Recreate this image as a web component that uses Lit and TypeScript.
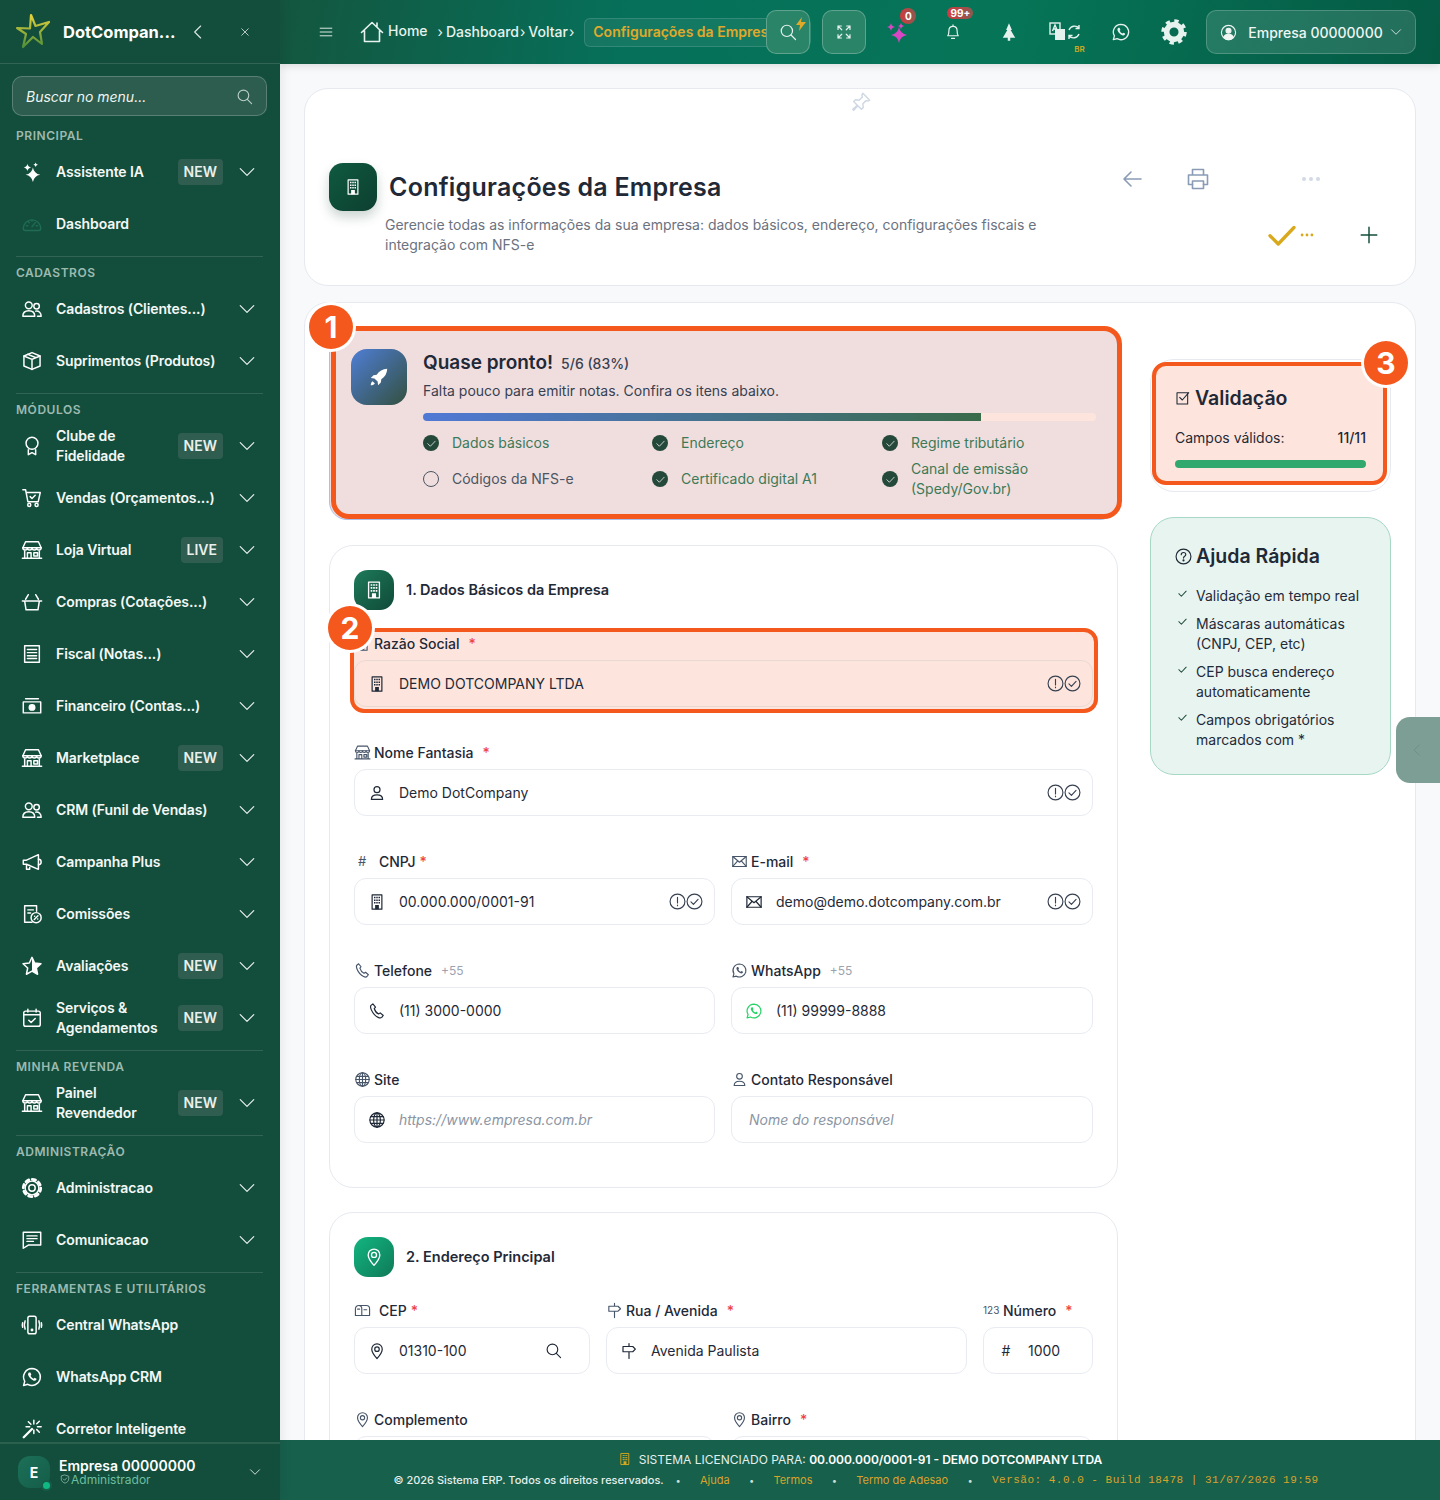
import { LitElement, css, html, svg, nothing } from 'lit';
import { customElement } from 'lit/decorators.js';

const star4 = (x: number, y: number, r: number) =>
	`M${x} ${y - r}Q${x + r * .15} ${y - r * .15} ${x + r} ${y}Q${x + r * .15} ${y + r * .15} ${x} ${y + r}Q${x - r * .15} ${y + r * .15} ${x - r} ${y}Q${x - r * .15} ${y - r * .15} ${x} ${y - r}z`;

const WA_BUBBLE = 'M12 2.8a9.2 9.2 0 0 0-7.9 13.9L2.8 21.2l4.6-1.2A9.2 9.2 0 1 0 12 2.8z';
const WA_PHONE = 'M8.6 7.2c-.7.6-1.2 1.7-.7 3 .8 2.3 3.2 4.8 5.6 5.7 1.4.5 2.4.1 3-.7.4-.5.5-1.1.4-1.3l-2.1-1.1-1 1.1c-1.4-.6-2.8-2-3.4-3.4l.9-1-.9-2.2c-.3-.3-1.2-.4-1.8-.1z';

const ICONS: Record<string, unknown> = {
	sparkles: svg`<path fill="currentColor" stroke="none" d="${star4(13, 15, 8)}"/><path fill="currentColor" stroke="none" d="${star4(7, 7, 4)}"/><path fill="currentColor" stroke="none" d="${star4(16, 4, 2.5)}"/>`,
	gauge: svg`<path d="M2.5 17a9.5 9.5 0 1 1 19 0c0 1.3-.8 2-2 2h-15c-1.2 0-2-.7-2-2z"/><path d="M12 15l3.5-4.5M6 14h1.5M16.5 14H18M8 9.5l1 1M12 7.5V9"/>`,
	people: svg`<circle cx="8.5" cy="8" r="3.7"/><path d="M2 20c0-4 2.6-6 6.500-6s6.500 2 6.500 6z"/><circle cx="17" cy="9" r="3"/><path d="M16 14.300c3.600-.4 6 1.700 6 5.700h-4"/>`,
	box: svg`<path d="M12 2.800l8.800 3.700v11L12 21.200l-8.800-3.700v-11z"/><path d="M3.200 6.500l8.800 3.700 8.800-3.700M12 10.200v11M7.500 4.700l9 3.700"/>`,
	award: svg`<circle cx="12" cy="9" r="6.500"/><path d="M8 16v5.500l4-2.200 4 2.200V16"/>`,
	cart: svg`<path d="M2 3h3l2.500 13h11.300L21 6H5.600"/><path d="M10 10.500l2 2 3.500-3.500"/><circle cx="9" cy="19.500" r="1.700"/><circle cx="17" cy="19.500" r="1.700"/>`,
	shop: svg`<path d="M5 3h14l3 6.500a2.500 2.500 0 0 1-5 0 2.500 2.500 0 0 1-5 0 2.500 2.500 0 0 1-5 0 2.500 2.500 0 0 1-5 0z"/><path d="M4 13v8h16v-8M7 21v-6h4v6M14 15h4v3.500h-4zM1.500 21h21M2 9.500h20"/>`,
	basket: svg`<path d="M1.500 11h21M8 4l-3 5M16 4l3 5M4 11l1.500 9.500h13L20 11"/>`,
	receipt: svg`<path d="M4 3h16v18H4z"/><path d="M7 7h10M7 10.500h10M7 14h10M7 17h10"/>`,
	cash: svg`<path d="M2.500 7.500h19v12h-19zM5 4h14"/><circle cx="12" cy="13.500" r="3" fill="currentColor"/>`,
	megaphone: svg`<path d="M2.500 10v4.500H6L19 20V4L6 10zM6 14.500V20h3.500v-4.200"/><path d="M19 9c1.800 0 3 1.300 3 3s-1.200 3-3 3"/>`,
	commission: svg`<path d="M12 21H4V3h13v6M7.500 7.500h6M7.500 11h3"/><circle cx="16.500" cy="16" r="5.500"/><path d="M14.500 18l4-4M14.800 14.500h.1M18.200 17.500h.1"/>`,
	star: svg`<path d="M12 2.500l2.900 6.300 6.900.8-5.100 4.600 1.400 6.800L12 17.600 5.900 21l1.400-6.800L2.200 9.600l6.900-.8z"/><path fill="currentColor" stroke="none" d="M12 2.500l2.900 6.300 6.900.8-5.100 4.600 1.400 6.800L12 17.600z"/>`,
	calendar: svg`<rect x="3" y="4.500" width="18" height="16.500" rx="2"/><path d="M3 8.500h18M7.500 2.500v3M16.500 2.500v3M8.500 14.500l2.500 2.500 4.500-4.500"/>`,
	gear: svg`<circle cx="12" cy="12" r="3.500"/><circle cx="12" cy="12" r="7.500"/><circle cx="12" cy="12" r="9.500" stroke-width="3" stroke-dasharray="3.700 3.760"/>`,
	gearSolid: svg`<circle cx="12" cy="12" r="6.800" stroke-width="5.200"/><circle cx="12" cy="12" r="10" stroke-width="3.500" stroke-linecap="butt" stroke-dasharray="3.900 3.950"/>`,
	chat: svg`<path d="M2.500 3.500h19v14H8l-5.500 3.500z"/><path d="M6.500 7.500h11M6.500 10.500h11M6.500 13.500h7"/>`,
	vibrate: svg`<rect x="7.500" y="2.500" width="9" height="19" rx="2"/><path d="M4.500 7.500c-1 2.500-1 6.500 0 9M19.500 7.500c1 2.500 1 6.500 0 9M1.800 9.500c-.5 1.500-.5 3.500 0 5M22.200 9.500c.5 1.500.5 3.500 0 5"/><circle cx="12" cy="17.500" r=".8" fill="currentColor"/>`,
	whatsapp: svg`<path d="${WA_BUBBLE}"/><path fill="currentColor" stroke="none" d="${WA_PHONE}"/>`,
	magic: svg`<path d="M3 21l9-9" stroke-width="2.600"/><path d="M14 2.500v4M14 13v4M5.500 9.500h4M18 9.500h4M8 4l2.800 2.800M20 3.500l-2.800 2.800M20 15.500l-2.800-2.800"/>`,
	search: svg`<circle cx="10.500" cy="10.500" r="7.500"/><path d="M16 16l6 6"/>`,
	menu: svg`<path d="M2 5.500h20M2 12h20M2 18.500h20"/>`,
	home: svg`<path d="M1.500 12.500L12 2.500l10.500 10M4.500 10.500V21.500h15V10.500M17 3v3.500"/>`,
	expand: svg`<path d="M4 4l5 5M4 8.500V4h4.500M20 4l-5 5M15.500 4H20v4.500M4 20l5-5M4 15.500V20h4.500M20 20l-5-5M20 15.500V20h-4.500"/>`,
	bell: svg`<path d="M5 17c1.500-2 1.500-4 1.500-6.500 0-3.500 2.300-6 5.500-6s5.500 2.500 5.500 6c0 2.500 0 4.500 1.500 6.500z"/><path d="M10 20.500h4M12 2.500v2" />`,
	tree: svg`<path fill="currentColor" stroke="none" d="M12 1.500l3.500 8H14l4 7 1.500 2.500h-6v3.500h-3V19h-6L6 16.500l4-7H8.500z"/>`,
	userCircle: svg`<circle cx="12" cy="12" r="10"/><circle cx="12" cy="9.500" r="3.500" fill="currentColor"/><path fill="currentColor" d="M5.500 18.500c1-3 3.500-4 6.500-4s5.500 1 6.500 4c-1.500 2-4 3.500-6.500 3.500s-5-1.500-6.500-3.500z"/>`,
	chevDown: svg`<path d="M3 7.500l9 9 9-9"/>`,
	chevLeft: svg`<path d="M16 3l-9 9 9 9"/>`,
	close: svg`<path d="M5.500 5.500l13 13M18.500 5.500l-13 13"/>`,
	pin: svg`<path d="M14 2.500l7.500 7.500-2 1-2-.5-3.500 3.500.5 4-2 2-4-4-4.500 5-1-1 5-4.500-4-4 2-2 4 .5L13.500 6.500l-.5-2z"/>`,
	arrowLeft: svg`<path d="M21 12H4M11 5l-7 7 7 7"/>`,
	printer: svg`<path d="M6.500 8V2.500h11V8M6.500 17.500h-4V8h19v9.500h-4"/><path d="M6.500 14h11v7.500h-11z"/>`,
	plus: svg`<path d="M12 3.500v17M3.500 12h17"/>`,
	building: svg`<path d="M5.500 2.500h13v19h-13z"/><path fill="currentColor" stroke="none" d="M8 5h2v2H8zM11 5h2v2h-2zM14 5h2v2h-2zM8 8.500h2v2H8zM11 8.500h2v2h-2zM14 8.500h2v2h-2zM8 12h2v2H8zM11 12h2v2h-2zM14 12h2v2h-2zM9.500 16h5v5.500h-5z"/>`,
	person: svg`<circle cx="12" cy="7.500" r="4"/><path d="M4.500 20.500c0-4.500 3-6 7.500-6s7.500 1.500 7.500 6z"/>`,
	envelope: svg`<path d="M2.500 5h19v14h-19z"/><path d="M2.500 5l9.500 8 9.500-8M2.500 19l7-8M21.500 19l-7-8"/>`,
	phone: svg`<path d="M6.500 2.500L4 4.500c-1 1-.8 3 .5 6 1.800 4.200 5 8 9 10 2 1 3.700 1 4.800 0l2-2.500-4-3.500-2.200 1.500c-2-.9-4.900-4.300-5.800-7.300l1.700-2z"/>`,
	globe: svg`<circle cx="12" cy="12" r="9.500"/><ellipse cx="12" cy="12" rx="4.500" ry="9.500"/><path d="M2.500 12h19M12 2.500v19M3.800 7.500h16.400M3.800 16.500h16.400"/>`,
	pinGeo: svg`<path d="M12 22c-4-4.500-7-8.500-7-12.500a7 7 0 0 1 14 0C19 13.500 16 17.500 12 22z"/><circle cx="12" cy="9.500" r="3"/>`,
	signpost: svg`<path d="M12 2v4M12 13v9M4 6h13l3.500 3.500L17 13H4z"/>`,
	mailbox: svg`<path d="M6.500 5h11a4.500 4.500 0 0 1 4.500 4.500V19H2V9.500A4.500 4.500 0 0 1 6.500 5zM11 19V9.500A4.500 4.500 0 0 0 6.500 5"/><path d="M14 11h4M5 10h3"/>`,
	checkSquare: svg`<path d="M3 4h16v17H3z"/><path d="M7 11l4 4 9.500-11"/>`,
	help: svg`<circle cx="12" cy="12" r="10.500"/><path d="M8.800 9.500c0-2 1.400-3.200 3.200-3.200s3.200 1.100 3.200 2.900c0 2.500-3.200 2.500-3.200 5"/><circle cx="12" cy="17.500" r=".7" fill="currentColor"/>`,
	check: svg`<path d="M4 12.500l5.500 5.500L20 7"/>`,
	alertCircle: svg`<circle cx="12" cy="12" r="10.500"/><path d="M12 6v8M12 17v1"/>`,
	checkCircle: svg`<circle cx="12" cy="12" r="10.500"/><path d="M7 12.500l3.500 3.500L17 9"/>`,
	shield: svg`<path d="M12 2.500l9 3v6c0 5-4 9-9 10.500-5-1.500-9-5.500-9-10.500v-6z"/><path d="M8 12l3 3 5-5.500"/>`,
	rocket: svg`<path fill="currentColor" stroke="none" d="M21 3c-5 .3-9 2.500-11.500 6.500L6 10l-3 3 4 .5L10.500 17l.5 4 3-3 .5-3.500C18.500 12 20.700 8 21 3zM5 16.500c-1.500 1-2 3-2 4.500 1.500 0 3.500-.5 4.500-2z"/>`,
};

const icon = (name: string, size = 24, cls = '') =>
	html`<svg class="ic ${cls}" width=${size} height=${size} viewBox="0 0 24 24" fill="none" stroke="currentColor" stroke-width="1.6" stroke-linecap="round" stroke-linejoin="round">${ICONS[name]}</svg>`;

const dots = html`<svg class="ic" width="20" height="6" viewBox="0 0 20 6" fill="currentColor"><circle cx="3" cy="3" r="2"/><circle cx="10" cy="3" r="2"/><circle cx="17" cy="3" r="2"/></svg>`;

type NavItem = { icon: string; text: string; badge?: string; chev?: boolean; dim?: boolean };

const NAV: { label: string; items: NavItem[] }[] = [
	{ label: 'PRINCIPAL', items: [
		{ icon: 'sparkles', text: 'Assistente IA', badge: 'NEW', chev: true },
		{ icon: 'gauge', text: 'Dashboard', dim: true },
	] },
	{ label: 'CADASTROS', items: [
		{ icon: 'people', text: 'Cadastros (Clientes...)', chev: true },
		{ icon: 'box', text: 'Suprimentos (Produtos)', chev: true },
	] },
	{ label: 'MÓDULOS', items: [
		{ icon: 'award', text: 'Clube de Fidelidade', badge: 'NEW', chev: true },
		{ icon: 'cart', text: 'Vendas (Orçamentos...)', chev: true },
		{ icon: 'shop', text: 'Loja Virtual', badge: 'LIVE', chev: true },
		{ icon: 'basket', text: 'Compras (Cotações...)', chev: true },
		{ icon: 'receipt', text: 'Fiscal (Notas...)', chev: true },
		{ icon: 'cash', text: 'Financeiro (Contas...)', chev: true },
		{ icon: 'shop', text: 'Marketplace', badge: 'NEW', chev: true },
		{ icon: 'people', text: 'CRM (Funil de Vendas)', chev: true },
		{ icon: 'megaphone', text: 'Campanha Plus', chev: true },
		{ icon: 'commission', text: 'Comissões', chev: true },
		{ icon: 'star', text: 'Avaliações', badge: 'NEW', chev: true },
		{ icon: 'calendar', text: 'Serviços & Agendamentos', badge: 'NEW', chev: true },
	] },
	{ label: 'MINHA REVENDA', items: [
		{ icon: 'shop', text: 'Painel Revendedor', badge: 'NEW', chev: true },
	] },
	{ label: 'ADMINISTRAÇÃO', items: [
		{ icon: 'gear', text: 'Administracao', chev: true },
		{ icon: 'chat', text: 'Comunicacao', chev: true },
	] },
	{ label: 'FERRAMENTAS E UTILITÁRIOS', items: [
		{ icon: 'vibrate', text: 'Central WhatsApp' },
		{ icon: 'whatsapp', text: 'WhatsApp CRM' },
		{ icon: 'magic', text: 'Corretor Inteligente' },
	] },
];

const CHECKLIST = [
	{ text: 'Dados básicos', done: true },
	{ text: 'Endereço', done: true },
	{ text: 'Regime tributário', done: true },
	{ text: 'Códigos da NFS-e', done: false },
	{ text: 'Certificado digital A1', done: true },
	{ text: 'Canal de emissão (Spedy/Gov.br)', done: true },
];

const HELP = [
	'Validação em tempo real',
	'Máscaras automáticas (CNPJ, CEP, etc)',
	'CEP busca endereço automaticamente',
	'Campos obrigatórios marcados com *',
];

type Field = {
	label: string;
	labelIcon?: string;
	labelText?: string;
	req?: boolean;
	tight?: boolean;
	hint?: string;
	inputIcon?: string;
	inputText?: string;
	value?: string;
	placeholder?: string;
	status?: boolean;
	lookup?: boolean;
	wa?: boolean;
	mark?: boolean;
	cls?: string;
};

@customElement('app-root')
export class AppRoot extends LitElement {
	static styles = css`
		:host {
			display: block;
			width: 1440px;
			height: 1500px;
			overflow: hidden;
			font-family: Inter, "Liberation Sans", sans-serif;
			font-size: 14px;
			color: #1f2937;
		}
		* { box-sizing: border-box; }
		.ic { display: block; flex-shrink: 0; }

		.app {
			display: grid;
			grid-template-columns: 280px 1fr;
			height: 1500px;
		}

		/* sidebar */
		.side {
			display: flex;
			flex-direction: column;
			height: 1500px;
			min-height: 0;
			background: #134e3c;
			color: #fff;
			box-shadow: 2px 0 10px rgba(0, 0, 0, .08);
			position: relative;
			z-index: 2;
		}
		.brand {
			display: flex;
			align-items: center;
			height: 64px;
			flex-shrink: 0;
			padding-left: 14px;
			border-bottom: 1px solid rgba(255, 255, 255, .13);
		}
		.brand .name {
			width: 111px;
			margin-left: 11px;
			font-size: 16.5px;
			font-weight: 700;
			white-space: nowrap;
		}
		.brand .back { margin-left: 16px; color: #dfe9e5; }
		.brand .x { margin-left: 33px; color: #dfe9e5; }
		.search-wrap { padding: 12px 13px 4px 12px; flex-shrink: 0; }
		.search {
			display: flex;
			align-items: center;
			justify-content: space-between;
			height: 40px;
			padding: 0 13px;
			border: 1px solid rgba(255, 255, 255, .22);
			border-radius: 10px;
			background: #2c5d4e;
			font-style: italic;
			color: #eef5f2;
		}
		.search .ic { color: #b8cdc6; }
		.nav { flex: 1; min-height: 0; overflow: hidden; }
		.sep { height: 1px; margin: 6px 17px 0 16px; background: rgba(255, 255, 255, .13); }
		.sec-label {
			margin-top: 5px;
			padding-left: 16px;
			height: 21px;
			line-height: 21px;
			font-size: 12px;
			font-weight: 600;
			letter-spacing: .55px;
			color: #9dbab0;
		}
		.item {
			display: flex;
			align-items: center;
			height: 52px;
			padding: 0 24px 0 21px;
		}
		.item .label {
			flex: 1;
			margin-left: 13px;
			font-weight: 600;
			font-size: 14px;
			letter-spacing: -.1px;
			line-height: 20px;
			color: #f4f8f6;
		}
		.item .dim { color: #1f6b55; }
		.badge {
			margin-left: 6px;
			padding: 0 6px;
			height: 26px;
			line-height: 26px;
			border-radius: 4px;
			background: #2f5d50;
			font-weight: 600;
			color: #e8f0ed;
		}
		.item .chev { margin-left: 15px; color: #e8f0ed; }
		.side-foot {
			display: flex;
			align-items: center;
			flex-shrink: 0;
			height: 58px;
			padding: 0 19px 0 18px;
			border-top: 2px solid rgba(255, 255, 255, .1);
		}
		.avatar {
			position: relative;
			display: grid;
			place-items: center;
			width: 32px;
			height: 32px;
			border-radius: 12px;
			background: linear-gradient(135deg, #1c7058, #155d49);
			font-weight: 700;
		}
		.avatar::after {
			content: '';
			position: absolute;
			right: -2px;
			bottom: -3px;
			width: 7px;
			height: 7px;
			border-radius: 50%;
			background: #10b981;
			border: 2px solid #155d49;
			box-sizing: content-box;
		}
		.who { flex: 1; margin-left: 9px; }
		.who .n { font-size: 14px; font-weight: 600; line-height: 13px; }
		.who .r {
			display: flex;
			align-items: center;
			margin-top: 1px;
			font-size: 12px;
			line-height: 13px;
			color: #6dbf9f;
		}
		.who .r .ic { margin: 0 1px; color: #a9cfc0; }

		/* main column */
		.main {
			display: flex;
			flex-direction: column;
			min-width: 0;
			height: 1500px;
			background: #f8f9fb;
		}
		.top {
			display: flex;
			align-items: center;
			flex-shrink: 0;
			height: 64px;
			padding-left: 39px;
			background: linear-gradient(100deg, #14563f 0%, #06705a 30%, #067557 62%, #055a44 100%);
			box-shadow: 0 2px 8px rgba(0, 0, 0, .12);
			color: #e6f2ee;
			position: relative;
			z-index: 1;
		}
		.crumb { font-weight: 500; white-space: nowrap; transform: translateY(-1px); }
		.crumb.up { transform: translateY(-2px); margin: 0 9px 0 4px; }
		.spacer { width: 27px; }
		.gt { margin: 0 3px 0 1px; color: #e6f2ee; transform: translateY(-1px); }
		.pill {
			width: 227px;
			height: 29px;
			line-height: 25px;
			margin-left: 7px;
			padding-left: 8px;
			border: 1px solid rgba(255, 255, 255, .13);
			border-radius: 6px;
			background: rgba(255, 255, 255, .06);
			color: #e0a92a;
			font-weight: 600;
			white-space: nowrap;
		}
		.tbtn {
			display: grid;
			place-items: center;
			width: 44px;
			height: 44px;
			border: 1px solid rgba(255, 255, 255, .25);
			border-radius: 10px;
			background: #2a8468;
			position: relative;
		}
		.tbtn.search-btn { margin-left: -45px; }
		.tbtn.full { margin-left: 12px; }
		.bolt { position: absolute; top: 6px; right: 3px; color: #e0a92a; }
		.spark { color: #d946c4; }
		.cell {
			display: grid;
			place-items: center;
			width: 56px;
			height: 44px;
			position: relative;
		}
		.cell.first { margin-left: 3px; }
		.cell.gear { width: 50px; }
		.count {
			position: absolute;
			display: grid;
			place-items: center;
			color: #fff;
			font-size: 10px;
			font-weight: 700;
			height: 16px;
			border-radius: 8px;
			background: linear-gradient(90deg, #d13a3f, #8a5a50);
		}
		.count.zero { top: -2px; left: 31px; width: 16px; }
		.count.many { top: -3px; left: 22px; width: 26px; height: 12px; }
		.br { position: absolute; left: 37px; top: 34px; font-size: 8px; font-weight: 600; color: #cfa824; }
		.user {
			display: flex;
			align-items: center;
			width: 210px;
			height: 44px;
			margin-left: 7px;
			padding: 0 13px;
			border: 1px solid rgba(255, 255, 255, .2);
			border-radius: 10px;
			background: rgba(255, 255, 255, .12);
			font-size: 14px;
			font-weight: 500;
			color: #f0f6f3;
		}
		.user span { flex: 1; margin-left: 11px; white-space: nowrap; }

		.content {
			flex: 1;
			min-height: 0;
			overflow: hidden;
			padding: 24px;
			position: relative;
		}
		.card {
			background: #fff;
			border: 1px solid #e6e9ef;
			border-radius: 24px;
		}
		.head {
			display: flex;
			justify-content: space-between;
			height: 198px;
			padding: 74px 24px 0;
			position: relative;
		}
		.head .pin { position: absolute; left: 545px; top: 2px; color: #cfd8e3; }
		.htitle { display: flex; align-items: center; gap: 12px; }
		.hicon {
			display: grid;
			place-items: center;
			width: 48px;
			height: 48px;
			border-radius: 14px;
			background: linear-gradient(135deg, #0f5a40, #0d3f30);
			box-shadow: 0 6px 12px rgba(15, 60, 45, .22);
			color: #fff;
		}
		h1 {
			margin: 0;
			font-size: 25px;
			font-weight: 600;
			letter-spacing: .25px;
			color: #1f2937;
		}
		.hdesc {
			width: 665px;
			margin: 4px 0 0 56px;
			line-height: 20px;
			color: #6b7280;
		}
		.actions { width: 281px; }
		.arow { display: flex; align-items: center; height: 32px; }
		.arow.one { color: #8a9bb5; }
		.arow.two { margin-top: 24px; }
		.arow .a1 { margin-left: 10px; }
		.arow .a2 { margin-left: 42px; }
		.arow .a3 { margin-left: 91px; color: #d3dae5; }
		.arow .b1 { margin-left: 154px; color: #d9a91d; }
		.arow .b1 .ic { stroke-width: 2.2; }
		.arow .b2 { width: 14px; color: #d9a91d; }
		.arow .b2 .ic { width: 14px; }
		.arow .b3 { margin-left: 44px; color: #134e3c; }

		.body {
			display: flex;
			gap: 32px;
			margin-top: 16px;
			padding: 24px;
			align-items: flex-start;
		}
		.left { width: 789px; flex-shrink: 0; }
		.right { width: 241px; margin-top: 32px; }

		/* tour markers */
		.hl {
			position: absolute;
			border: 5px solid #f4581c;
			border-radius: 18px;
			pointer-events: none;
		}
		.num {
			position: absolute;
			display: grid;
			place-items: center;
			width: 44px;
			height: 44px;
			border-radius: 50%;
			background: #f4581c;
			box-shadow: 0 0 0 3px #fff;
			color: #fff;
			font-size: 30px;
			font-weight: 700;
			z-index: 5;
		}

		.progress {
			position: relative;
			display: grid;
			grid-template-columns: 56px minmax(0, 1fr);
			gap: 16px;
			height: 193px;
			padding: 21px;
			margin-bottom: 25px;
			border: 1px solid #a9c0ea;
			border-radius: 18px;
			background: #f0dede;
		}
		.progress .hl { top: -2px; left: 1px; right: -5px; bottom: 0; }
		.progress .num { left: -21px; top: -23px; }
		.rocket {
			display: grid;
			place-items: center;
			width: 56px;
			height: 56px;
			border-radius: 16px;
			background: linear-gradient(135deg, #4f7ed6, #33503f);
			color: #fff;
		}
		.ptitle {
			display: flex;
			align-items: baseline;
			gap: 8px;
			height: 26px;
			line-height: 28px;
			font-size: 19px;
			font-weight: 600;
			color: #1f2937;
		}
		.ptitle small { font-size: 14px; font-weight: 500; color: #374151; }
		.psub { margin-top: 6px; line-height: 20px; color: #374151; }
		.bar {
			height: 8px;
			margin-top: 12px;
			border-radius: 4px;
			background: #fde5dd;
			overflow: hidden;
		}
		.bar i {
			display: block;
			height: 100%;
			background: linear-gradient(90deg, #5079d6, #3a6b4a);
		}
		.checks {
			display: grid;
			grid-template-columns: 229px 230px 214px;
			grid-template-rows: 20px 40px;
			row-gap: 6px;
			margin-top: 12px;
		}
		.chk { display: flex; align-items: center; gap: 13px; line-height: 20px; color: #3c7a58; padding-right: 40px; }
		.chk.off { color: #4b5563; }
		.dot {
			display: grid;
			place-items: center;
			width: 16px;
			height: 16px;
			border-radius: 50%;
			background: #24493a;
			color: #fff;
			flex-shrink: 0;
		}
		.dot.off { background: transparent; border: 1px solid #4b5563; }

		.sect { padding: 24px; margin-bottom: 24px; }
		.sect.one { height: 643px; }
		.sect.two { height: 400px; margin-bottom: 0; }
		.sect-head { display: flex; align-items: center; gap: 12px; height: 40px; margin-bottom: 23px; }
		.sect-icon {
			display: grid;
			place-items: center;
			width: 40px;
			height: 40px;
			border-radius: 14px;
			background: linear-gradient(135deg, #1e7a5a, #0f4a38);
			color: #fff;
		}
		.sect-icon.geo { background: linear-gradient(135deg, #12b57f, #0f7a58); }
		h2 { margin: -2px 0 0; font-size: 14.5px; font-weight: 600; color: #1f2937; }

		.grid {
			display: grid;
			grid-template-columns: 361px 362px;
			column-gap: 16px;
			row-gap: 35px;
			width: 739px;
		}
		.f { position: relative; min-width: 0; }
		.w12 { grid-column: span 2; }
		.addr { grid-template-columns: 236px 361px 110px; }
		.addr2 { margin-top: 35px; }
		.lab {
			position: relative;
			z-index: 1;
			display: flex;
			align-items: center;
			height: 20px;
			margin-bottom: 7px;
			font-weight: 500;
			color: #1f2937;
			white-space: nowrap;
		}
		.lab .ic { margin-right: 3px; color: #475569; }
		.lab .ic.wide { margin-right: 8px; }
		.lab .glyph { width: 25px; padding-left: 4px; color: #475569; font-size: 13px; font-weight: 400; }
		.lab .glyph.small { width: 20px; padding-left: 0; font-size: 10px; }
		.lab .req { margin-left: 9px; color: #ef4444; }
		.lab .req.tight { margin-left: 4px; }
		.lab .hint { margin-left: 9px; font-size: 12px; font-weight: 400; color: #9ca3af; }
		.inp {
			position: relative;
			z-index: 1;
			display: flex;
			align-items: center;
			height: 47px;
			padding: 0 11px 0 13px;
			border: 1.5px solid #e8ebf1;
			border-radius: 12px;
			background: #fff;
			color: #1f2937;
		}
		.f.marked .inp { background: transparent; border-color: #ead9d2; }
		.inp .txt { flex: 1; margin-left: 13px; white-space: nowrap; }
		.inp .txt.ph { font-style: italic; color: #8b95a3; }
		.inp .txt.bare { margin-left: 4px; }
		.inp .glyph { width: 18px; text-align: center; font-size: 14px; }
		.inp .st { display: flex; color: #374151; }
		.inp .find { margin-right: 16px; }
		.inp .green { color: #25d366; }
		.f .mark {
			position: absolute;
			top: -5px;
			left: -4px;
			right: -5px;
			bottom: -6px;
			background: #fde5dd;
			border-width: 4px;
			border-radius: 14px;
		}
		.f .num { left: -26px; top: -27px; }

		.val {
			position: relative;
			height: 133px;
			padding: 24px;
			margin-bottom: 25px;
		}
		.val .hl { top: 2px; left: 1px; right: 3px; bottom: 6px; background: #fde5dd; border-width: 4px; border-radius: 14px; }
		.val .num { right: -18px; top: -19px; }
		.val .inner { position: relative; z-index: 1; }
		.side-title {
			display: flex;
			align-items: center;
			gap: 4px;
			height: 28px;
			font-size: 19.5px;
			font-weight: 600;
			color: #1f2937;
		}
		.val .rowv {
			display: flex;
			justify-content: space-between;
			margin-top: 16px;
			line-height: 20px;
			color: #1f2937;
		}
		.val .rowv b { font-weight: 500; }
		.val .green-bar { height: 8px; margin-top: 12px; border-radius: 4px; background: #31a96e; }
		.help {
			padding: 24px;
			background: #e8f4ef;
			border: 1px solid #a6d8c5;
			border-radius: 24px;
		}
		.help ul { list-style: none; margin: 16px 0 0; padding: 0; display: grid; gap: 8px; }
		.help li { display: flex; gap: 8px; line-height: 20px; color: #1f2a3a; }
		.help li .ic { margin: 2px 0 0 2px; color: #1f4a3a; stroke-width: 2.2; }
		.tab {
			position: absolute;
			right: 0;
			top: 653px;
			display: grid;
			align-items: center;
			width: 44px;
			height: 66px;
			padding-left: 14px;
			border-radius: 14px 0 0 14px;
			background: #7d9e94;
			color: #6f8f86;
			z-index: 3;
		}

		/* footer */
		.foot {
			flex-shrink: 0;
			height: 60px;
			padding-top: 10px;
			background: #17604c;
			color: #e4efeb;
			text-align: center;
			position: relative;
			z-index: 1;
		}
		.l1 {
			display: flex;
			align-items: center;
			justify-content: center;
			gap: 7px;
			height: 18px;
			font-size: 12px;
		}
		.l1 .ic { color: #d9a91d; }
		.l1 b { font-weight: 600; color: #fff; }
		.l2 {
			display: flex;
			align-items: center;
			justify-content: center;
			height: 20px;
			margin-top: 2px;
			padding-right: 8px;
			font-size: 11px;
			font-weight: 500;
		}
		.l2 .d { margin: 0 19.5px; color: #cfe0da; font-size: 9px; }
		.l2 .d.first { margin-left: 12px; }
		.l2 a { color: #d9a32b; font-weight: 400; }
		.l2 code {
			font-family: "Liberation Mono", monospace;
			font-size: 11px;
			letter-spacing: .5px;
			color: #d9a32b;
		}
	`;

	private logo() {
		return html`<svg class="ic" width="38" height="38" viewBox="0 0 38 38">
			<defs><linearGradient id="lg" x1="0" y1="0" x2="0" y2="1"><stop offset="0" stop-color="#e6d23a"/><stop offset="1" stop-color="#4f8f3a"/></linearGradient></defs>
			<path fill="none" stroke="url(#lg)" stroke-width="2.2" stroke-linejoin="round" d="M17 2l4.500 11L35 9l-9 10 2 12-9-7-10 10 3-13L3 15l13 .5z"/>
		</svg>`;
	}

	private navItem(it: NavItem) {
		return html`<div class="item">
			<span class=${it.dim ? 'dim' : ''}>${icon(it.icon, 22)}</span>
			<span class="label">${it.text}</span>
			${it.badge ? html`<span class="badge">${it.badge}</span>` : nothing}
			${it.chev ? html`<span class="chev">${icon('chevDown', 18)}</span>` : nothing}
		</div>`;
	}

	private sidebar() {
		return html`<aside class="side">
			<div class="brand">
				${this.logo()}
				<div class="name">DotCompan...</div>
				<span class="back">${icon('chevLeft', 16)}</span>
				<span class="x">${icon('close', 12)}</span>
			</div>
			<div class="search-wrap">
				<div class="search">Buscar no menu...${icon('search', 17)}</div>
			</div>
			<nav class="nav">
				${NAV.map((s, i) => html`
					${i ? html`<div class="sep"></div>` : nothing}
					<div class="sec-label">${s.label}</div>
					${s.items.map((it) => this.navItem(it))}
				`)}
			</nav>
			<div class="side-foot">
				<div class="avatar">E</div>
				<div class="who">
					<div class="n">Empresa 00000000</div>
					<div class="r">${icon('shield', 10)}Administrador</div>
				</div>
				${icon('chevDown', 12)}
			</div>
		</aside>`;
	}

	private topbar() {
		return html`<header class="top">
			${icon('menu', 14)}
			<span class="spacer"></span>
			${icon('home', 24)}
			<span class="crumb up">Home</span>
			<span class="gt">›</span>
			<span class="crumb">Dashboard</span>
			<span class="gt">›</span>
			<span class="crumb">Voltar</span>
			<span class="gt">›</span>
			<div class="pill">Configurações da Empres</div>
			<div class="tbtn search-btn">${icon('search', 18)}<svg class="bolt" width="10" height="14" viewBox="0 0 10 14"><path fill="currentColor" d="M6 0L0 8h4l-1 6 7-9H5z"/></svg></div>
			<div class="tbtn full">${icon('expand', 18)}</div>
			<div class="cell first">
				<svg class="ic spark" width="24" height="24" viewBox="0 0 24 24"><path fill="currentColor" d="${star4(14, 15, 8)}"/><path fill="currentColor" d="${star4(6, 7, 4)}"/><path fill="currentColor" d="${star4(16, 6, 3)}"/></svg>
				<span class="count zero">0</span>
			</div>
			<div class="cell">${icon('bell', 18)}<span class="count many">99+</span></div>
			<div class="cell">${icon('tree', 20)}</div>
			<div class="cell">
				<svg class="ic" width="32" height="20" viewBox="0 0 32 20" fill="none" stroke="currentColor" stroke-width="1.400">
					<rect x="1" y="1" width="10" height="11" fill="none"/>
					<rect x="6" y="7" width="10" height="11" fill="currentColor" stroke="none"/>
					<path d="M3.500 9l2.500-6 2.500 6M4.300 7h3.400"/>
					<path d="M20 8a6 6 0 0 1 10-2M30 12a6 6 0 0 1-10 2M30 3v3.500h-3.500M20 17v-3.500h3.500" />
				</svg>
				<span class="br">BR</span>
			</div>
			<div class="cell">${icon('whatsapp', 20)}</div>
			<div class="cell gear">${icon('gearSolid', 26)}</div>
			<div class="user">${icon('userCircle', 17)}<span>Empresa 00000000</span>${icon('chevDown', 12)}</div>
		</header>`;
	}

	private field(f: Field) {
		return html`<div class="f ${f.cls ?? ''} ${f.mark ? 'marked' : ''}">
			${f.mark ? html`<div class="hl mark"></div><div class="num">2</div>` : nothing}
			<div class="lab">
				${f.labelText
					? html`<span class="glyph ${f.labelText.length > 1 ? 'small' : ''}">${f.labelText}</span>`
					: f.labelIcon ? icon(f.labelIcon, 17, f.tight ? 'wide' : '') : nothing}
				${f.label}
				${f.req ? html`<span class="req ${f.tight ? 'tight' : ''}">*</span>` : nothing}
				${f.hint ? html`<span class="hint">${f.hint}</span>` : nothing}
			</div>
			<div class="inp">
				${f.inputText
					? html`<span class="glyph">${f.inputText}</span>`
					: f.inputIcon ? html`<span class=${f.wa ? 'green' : ''}>${icon(f.inputIcon, 18)}</span>` : nothing}
				<span class="txt ${f.value ? '' : 'ph'} ${f.inputIcon || f.inputText ? '' : 'bare'}">${f.value ?? f.placeholder}</span>
				${f.status ? html`<span class="st">${icon('alertCircle', 17)}${icon('checkCircle', 17)}</span>` : nothing}
				${f.lookup ? html`<span class="find">${icon('search', 17)}</span>` : nothing}
			</div>
		</div>`;
	}

	private sectionOne() {
		const rows: Field[] = [
			{ label: 'Razão Social', labelIcon: 'building', req: true, inputIcon: 'building', value: 'DEMO DOTCOMPANY LTDA', status: true, mark: true, cls: 'w12' },
			{ label: 'Nome Fantasia', labelIcon: 'shop', req: true, inputIcon: 'person', value: 'Demo DotCompany', status: true, cls: 'w12' },
			{ label: 'CNPJ', labelText: '#', req: true, tight: true, inputIcon: 'building', value: '00.000.000/0001-91', status: true },
			{ label: 'E-mail', labelIcon: 'envelope', req: true, inputIcon: 'envelope', value: 'demo@demo.dotcompany.com.br', status: true },
			{ label: 'Telefone', labelIcon: 'phone', hint: '+55', inputIcon: 'phone', value: '(11) 3000-0000' },
			{ label: 'WhatsApp', labelIcon: 'whatsapp', hint: '+55', inputIcon: 'whatsapp', wa: true, value: '(11) 99999-8888' },
			{ label: 'Site', labelIcon: 'globe', inputIcon: 'globe', placeholder: 'https://www.empresa.com.br' },
			{ label: 'Contato Responsável', labelIcon: 'person', placeholder: 'Nome do responsável' },
		];
		return html`<section class="card sect one">
			<div class="sect-head">
				<div class="sect-icon">${icon('building', 20)}</div>
				<h2>1. Dados Básicos da Empresa</h2>
			</div>
			<div class="grid">${rows.map((f) => this.field(f))}</div>
		</section>`;
	}

	private sectionTwo() {
		const row1: Field[] = [
			{ label: 'CEP', labelIcon: 'mailbox', req: true, tight: true, lookup: true, inputIcon: 'pinGeo', value: '01310-100' },
			{ label: 'Rua / Avenida', labelIcon: 'signpost', req: true, inputIcon: 'signpost', value: 'Avenida Paulista' },
			{ label: 'Número', labelText: '123', req: true, inputText: '#', value: '1000' },
		];
		const row2: Field[] = [
			{ label: 'Complemento', labelIcon: 'pinGeo', placeholder: ' ' },
			{ label: 'Bairro', labelIcon: 'pinGeo', req: true, placeholder: ' ' },
		];
		return html`<section class="card sect two">
			<div class="sect-head">
				<div class="sect-icon geo">${icon('pinGeo', 20)}</div>
				<h2>2. Endereço Principal</h2>
			</div>
			<div class="grid addr">${row1.map((f) => this.field(f))}</div>
			<div class="grid addr2">${row2.map((f) => this.field(f))}</div>
		</section>`;
	}

	render() {
		return html`<div class="app">
			${this.sidebar()}
			<div class="main">
				${this.topbar()}
				<main class="content">
					<div class="card head">
						<span class="pin">${icon('pin', 22)}</span>
						<div>
							<div class="htitle">
								<div class="hicon">${icon('building', 18)}</div>
								<h1>Configurações da Empresa</h1>
							</div>
							<div class="hdesc">Gerencie todas as informações da sua empresa: dados básicos, endereço, configurações fiscais e integração com NFS-e</div>
						</div>
						<div class="actions">
							<div class="arow one">
								<span class="a1">${icon('arrowLeft', 24)}</span>
								<span class="a2">${icon('printer', 24)}</span>
								<span class="a3">${dots}</span>
							</div>
							<div class="arow two">
								<span class="b1">${icon('check', 36)}</span>
								<span class="b2">${dots}</span>
								<span class="b3">${icon('plus', 22)}</span>
							</div>
						</div>
					</div>

					<div class="card body">
						<div class="left">
							<div class="progress">
								<div class="hl"></div>
								<div class="num">1</div>
								<div class="rocket">${icon('rocket', 22)}</div>
								<div>
									<div class="ptitle">Quase pronto! <small>5/6 (83%)</small></div>
									<div class="psub">Falta pouco para emitir notas. Confira os itens abaixo.</div>
									<div class="bar"><i style="width:82.9%"></i></div>
									<div class="checks">
										${CHECKLIST.map((c) => html`<div class="chk ${c.done ? '' : 'off'}">
											<span class="dot ${c.done ? '' : 'off'}">${c.done ? icon('check', 11) : nothing}</span>
											<span>${c.text}</span>
										</div>`)}
									</div>
								</div>
							</div>
							${this.sectionOne()}
							${this.sectionTwo()}
						</div>

						<div class="right">
							<div class="card val">
								<div class="hl"></div>
								<div class="num">3</div>
								<div class="inner">
									<div class="side-title">${icon('checkSquare', 16)}Validação</div>
									<div class="rowv"><span>Campos válidos:</span><b>11/11</b></div>
									<div class="green-bar"></div>
								</div>
							</div>
							<div class="help">
								<div class="side-title">${icon('help', 17)}Ajuda Rápida</div>
								<ul>
									${HELP.map((h) => html`<li>${icon('check', 11)}<span>${h}</span></li>`)}
								</ul>
							</div>
						</div>
					</div>
					<div class="tab">${icon('chevLeft', 14)}</div>
				</main>
				<footer class="foot">
					<div class="l1">${icon('building', 14)}<span>SISTEMA LICENCIADO PARA: <b>00.000.000/0001-91 - DEMO DOTCOMPANY LTDA</b></span></div>
					<div class="l2">
						<span>© 2026 Sistema ERP. Todos os direitos reservados.</span>
						<span class="d first">•</span><a>Ajuda</a>
						<span class="d">•</span><a>Termos</a>
						<span class="d">•</span><a>Termo de Adesao</a>
						<span class="d">•</span><code>Versão: 4.0.0 - Build 18478 | 31/07/2026 19:59</code>
					</div>
				</footer>
			</div>
		</div>`;
	}
}
